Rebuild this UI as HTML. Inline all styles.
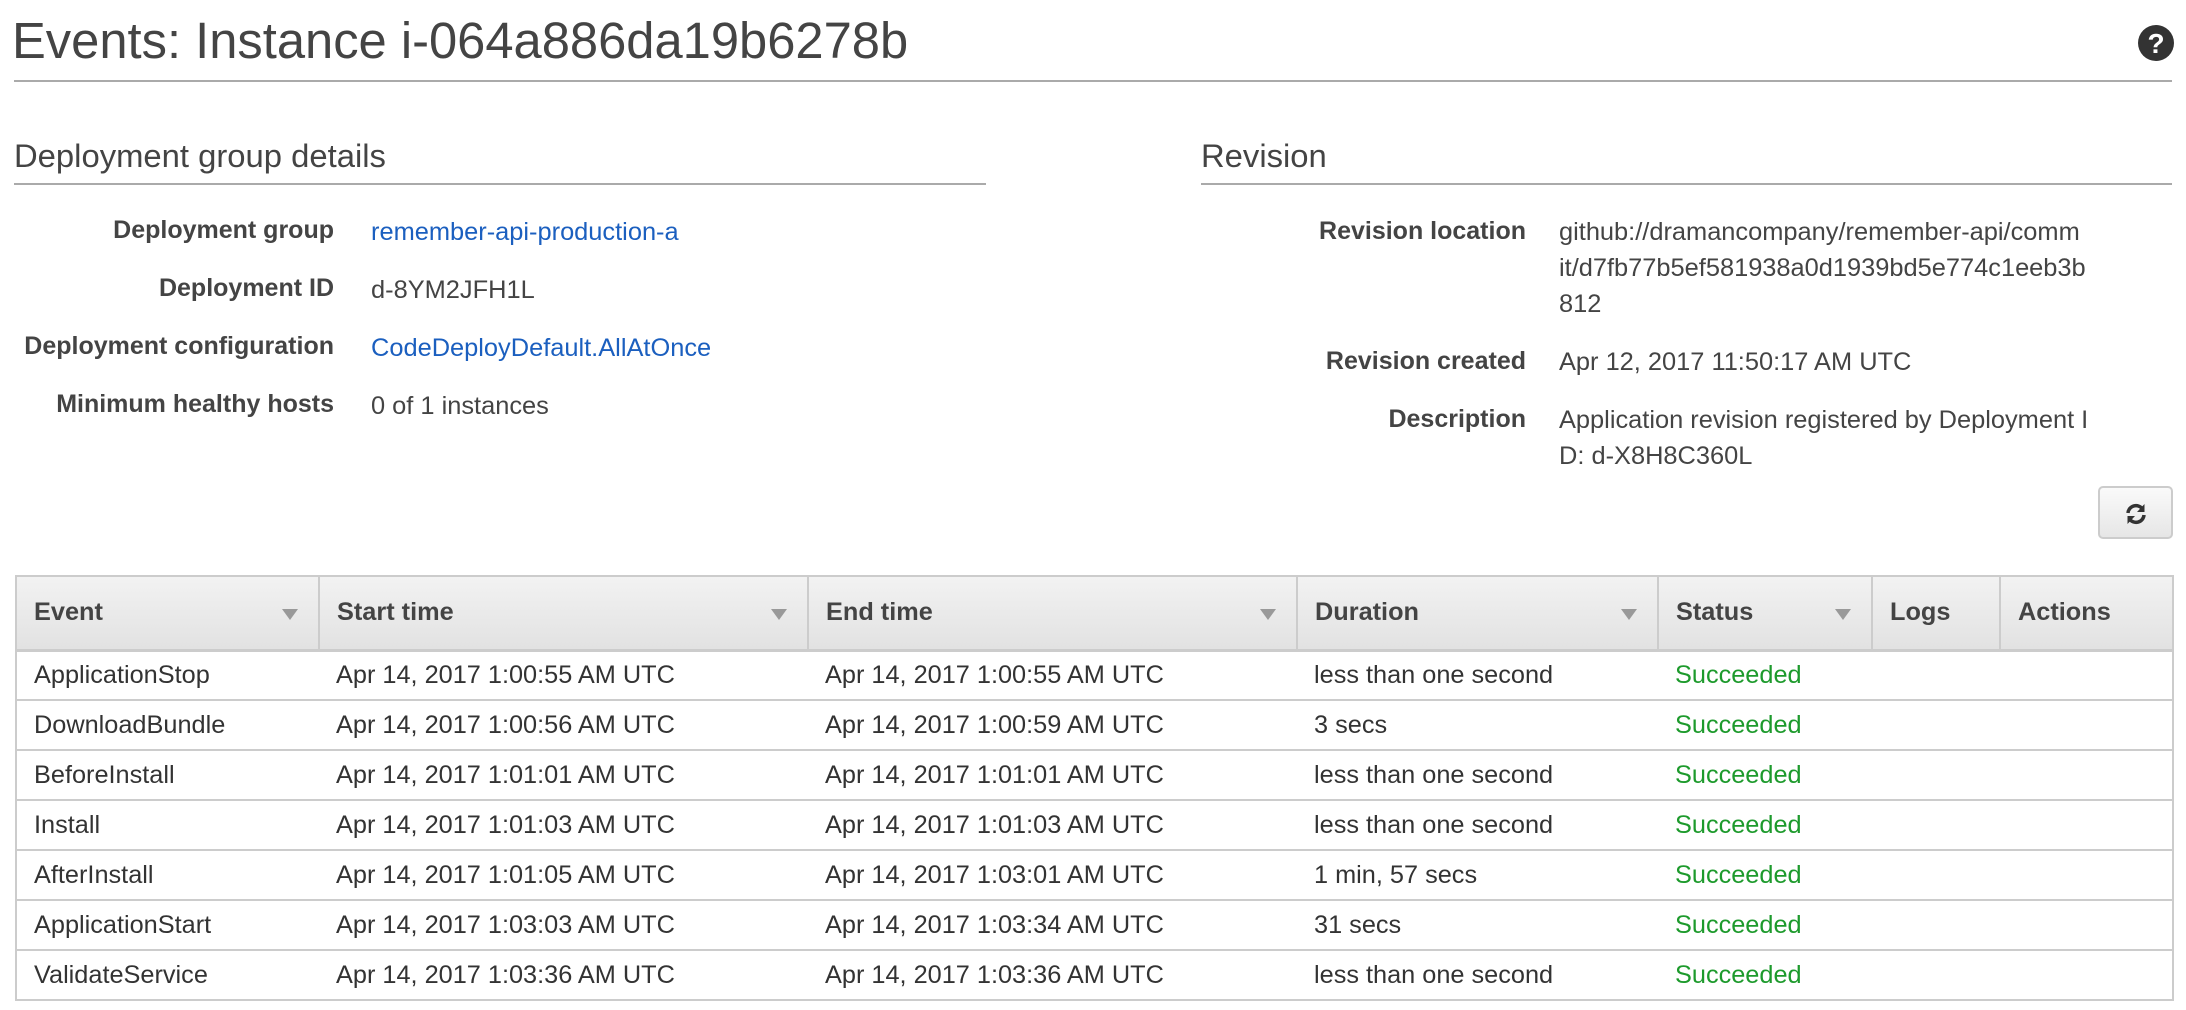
<!DOCTYPE html>
<html><head><meta charset="utf-8"><style>
*{margin:0;padding:0;box-sizing:border-box}
body{width:2186px;height:1010px;background:#fff;font-family:"Liberation Sans",Arial,sans-serif;color:#333;position:relative;overflow:hidden}
.a{position:absolute;white-space:nowrap}
h1{position:absolute;left:12px;top:13px;font-size:50.7px;font-weight:normal;color:#444;line-height:56px;white-space:nowrap}
.rule{position:absolute;height:2px;background:#aaa}
h2{position:absolute;font-size:32.8px;font-weight:normal;color:#444;line-height:36px;white-space:nowrap}
.lb{position:absolute;font-weight:bold;font-size:25px;text-align:right;color:#444;white-space:nowrap}
.v{position:absolute;font-size:25.4px;color:#444;white-space:nowrap;line-height:36px}
.lnk{color:#1b5fbf}
table{position:absolute;left:15px;top:575px;width:2157px;border-collapse:collapse;table-layout:fixed;font-size:25.3px}
th{height:74px;background:linear-gradient(#f2f2f2,#e2e2e2);border:2px solid #ccc;border-bottom:3px solid #ccc;text-align:left;padding-left:17px;font-weight:bold;color:#444;position:relative}
th .t{position:absolute;right:20px;top:32px;width:0;height:0;border-left:8px solid transparent;border-right:8px solid transparent;border-top:11px solid #999}
td{height:50px;border-top:2px solid #ccc;border-bottom:2px solid #ccc;padding-left:17px;color:#333;white-space:nowrap}
tr td:first-child{border-left:2px solid #ccc}
tr td:last-child{border-right:2px solid #ccc}
.ok{color:#1d9a2c}
</style></head><body>
<h1>Events: Instance i-064a886da19b6278b</h1>
<svg class="a" style="left:2138px;top:25px" width="36" height="36" viewBox="0 0 36 36"><circle cx="18" cy="18" r="18" fill="#333"/><text x="18" y="28" text-anchor="middle" font-family="Liberation Sans" font-weight="bold" font-size="28" fill="#fff">?</text></svg>
<div class="rule" style="left:14px;top:80px;width:2158px"></div>

<h2 style="left:14px;top:138px">Deployment group details</h2>
<div class="rule" style="left:14px;top:183px;width:972px"></div>
<h2 style="left:1201px;top:138px">Revision</h2>
<div class="rule" style="left:1201px;top:183px;width:971px"></div>

<div class="lb" style="right:1852px;top:216px">Deployment group</div>
<div class="lb" style="right:1852px;top:274px">Deployment ID</div>
<div class="lb" style="right:1852px;top:332px">Deployment configuration</div>
<div class="lb" style="right:1852px;top:390px">Minimum healthy hosts</div>
<div class="v lnk" style="left:371px;top:214px">remember-api-production-a</div>
<div class="v" style="left:371px;top:272px">d-8YM2JFH1L</div>
<div class="v lnk" style="left:371px;top:330px">CodeDeployDefault.AllAtOnce</div>
<div class="v" style="left:371px;top:388px">0 of 1 instances</div>

<div class="lb" style="right:660px;top:217px">Revision location</div>
<div class="lb" style="right:660px;top:347px">Revision created</div>
<div class="lb" style="right:660px;top:405px">Description</div>
<div class="v" style="left:1559px;top:214px">github://dramancompany/remember-api/comm<br>it/d7fb77b5ef581938a0d1939bd5e774c1eeb3b<br>812</div>
<div class="v" style="left:1559px;top:344px">Apr 12, 2017 11:50:17 AM UTC</div>
<div class="v" style="left:1559px;top:402px">Application revision registered by Deployment I<br>D: d-X8H8C360L</div>

<div class="a" style="left:2098px;top:486px;width:75px;height:53px;border:2px solid #ccc;border-radius:5px;background:linear-gradient(#fafafa,#e6e6e6)">
<svg style="position:absolute;left:24px;top:14px" width="24" height="24" viewBox="0 0 24 24"><path d="M4 11 A8 8 0 0 1 18.5 7" fill="none" stroke="#333" stroke-width="3.5"/><path d="M20.5 2 L20.5 10 L13 10 Z" fill="#333"/><path d="M20 13 A8 8 0 0 1 5.5 17" fill="none" stroke="#333" stroke-width="3.5"/><path d="M3.5 22 L3.5 14 L11 14 Z" fill="#333"/></svg>
</div>

<table>
<colgroup><col style="width:303px"><col style="width:489px"><col style="width:489px"><col style="width:361px"><col style="width:214px"><col style="width:128px"><col style="width:173px"></colgroup>
<tr><th>Event<span class="t"></span></th><th>Start time<span class="t"></span></th><th>End time<span class="t"></span></th><th>Duration<span class="t"></span></th><th>Status<span class="t"></span></th><th>Logs</th><th>Actions</th></tr>
<tr><td>ApplicationStop</td><td>Apr 14, 2017 1:00:55 AM UTC</td><td>Apr 14, 2017 1:00:55 AM UTC</td><td>less than one second</td><td class="ok">Succeeded</td><td></td><td></td></tr>
<tr><td>DownloadBundle</td><td>Apr 14, 2017 1:00:56 AM UTC</td><td>Apr 14, 2017 1:00:59 AM UTC</td><td>3 secs</td><td class="ok">Succeeded</td><td></td><td></td></tr>
<tr><td>BeforeInstall</td><td>Apr 14, 2017 1:01:01 AM UTC</td><td>Apr 14, 2017 1:01:01 AM UTC</td><td>less than one second</td><td class="ok">Succeeded</td><td></td><td></td></tr>
<tr><td>Install</td><td>Apr 14, 2017 1:01:03 AM UTC</td><td>Apr 14, 2017 1:01:03 AM UTC</td><td>less than one second</td><td class="ok">Succeeded</td><td></td><td></td></tr>
<tr><td>AfterInstall</td><td>Apr 14, 2017 1:01:05 AM UTC</td><td>Apr 14, 2017 1:03:01 AM UTC</td><td>1 min, 57 secs</td><td class="ok">Succeeded</td><td></td><td></td></tr>
<tr><td>ApplicationStart</td><td>Apr 14, 2017 1:03:03 AM UTC</td><td>Apr 14, 2017 1:03:34 AM UTC</td><td>31 secs</td><td class="ok">Succeeded</td><td></td><td></td></tr>
<tr><td>ValidateService</td><td>Apr 14, 2017 1:03:36 AM UTC</td><td>Apr 14, 2017 1:03:36 AM UTC</td><td>less than one second</td><td class="ok">Succeeded</td><td></td><td></td></tr>
</table>
</body></html>
